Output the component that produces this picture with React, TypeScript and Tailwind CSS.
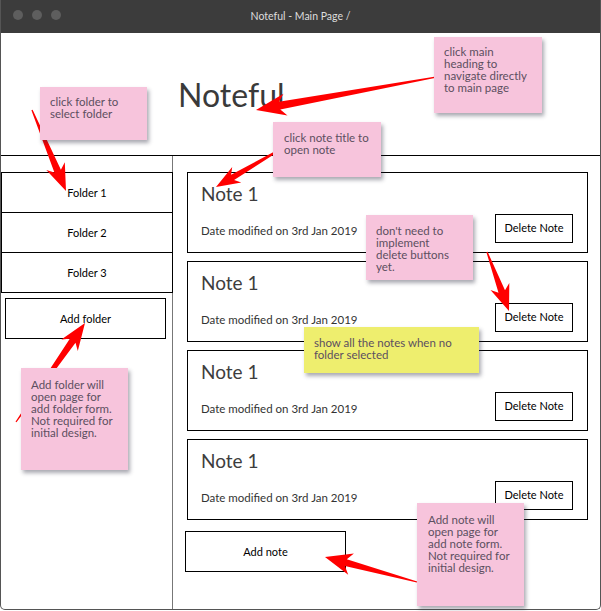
import React from 'react';

type Pt = [number, number];

// tapered pointer arrow, thin at the tail and wide at the head
function arrowPoints(tail: Pt, tip: Pt, headLen = 26, headHalf = 10, shaft = 3.5) {
    const dx = tip[0] - tail[0];
    const dy = tip[1] - tail[1];
    const len = Math.hypot(dx, dy);
    const ux = dx / len;
    const uy = dy / len;
    const nx = -uy;
    const ny = ux;
    const at = (d: number, off: number): string =>
        `${(tip[0] - ux * d + nx * off).toFixed(1)},${(tip[1] - uy * d + ny * off).toFixed(1)}`;
    return [
        `${(tail[0] + nx * 0.6).toFixed(1)},${(tail[1] + ny * 0.6).toFixed(1)}`,
        at(headLen * 0.8, shaft),
        at(headLen, headHalf),
        at(0, 0),
        at(headLen, -headHalf),
        at(headLen * 0.8, -shaft),
        `${(tail[0] - nx * 0.6).toFixed(1)},${(tail[1] - ny * 0.6).toFixed(1)}`,
    ].join(' ');
}

const arrows: { tail: Pt; tip: Pt; head?: number; half?: number; shaft?: number }[] = [
    { tail: [442, 76], tip: [256, 110], head: 30, half: 11, shaft: 4 },
    { tail: [32, 110], tip: [66, 191], head: 27, half: 10 },
    { tail: [286, 146], tip: [216, 187], head: 24, half: 9, shaft: 3 },
    { tail: [487, 252], tip: [509, 311], head: 26, half: 10 },
    { tail: [16, 422], tip: [85, 323], head: 27, half: 10 },
    { tail: [417, 582], tip: [325, 557], head: 27, half: 11 },
];

const stickies = [
    { cls: 'left-[40px] top-[87px] w-[107px] h-[53px] pt-[9px] pl-[10px] bg-[#f7c4dc]', lines: ['click folder to', 'select folder'] },
    { cls: 'left-[434px] top-[37px] w-[108px] h-[76px] pt-[9px] pl-[10px] bg-[#f7c4dc]', lines: ['click main', 'heading to', 'navigate directly', 'to main page'] },
    { cls: 'left-[273px] top-[122px] w-[108px] h-[55px] pt-[10px] pl-[11px] bg-[#f7c4dc]', lines: ['click note title to', 'open note'] },
    { cls: 'left-[366px] top-[215px] w-[107px] h-[65px] pt-[10px] pl-[10px] bg-[#f7c4dc]', lines: ["don't need to", 'implement', 'delete buttons', 'yet.'] },
    { cls: 'left-[304px] top-[327px] w-[175px] h-[46px] pt-[10px] pl-[10px] bg-[#eeee6e]', lines: ['show all the notes when no', 'folder selected'] },
    { cls: 'left-[417px] top-[503px] w-[107px] h-[103px] pt-[11px] pl-[11px] bg-[#f7c4dc]', lines: ['Add note will', 'open page for', 'add note form.', 'Not required for', 'initial design.'] },
    { cls: 'left-[21px] top-[368px] w-[107px] h-[102px] pt-[11px] pl-[10px] bg-[#f7c4dc]', lines: ['Add folder will', 'open page for', 'add folder form.', 'Not required for', 'initial design.'] },
];

function NoteCard() {
    return (
        <div className="h-[81px] w-[401px] border border-black flex flex-col pl-[13px] pr-[14px] pb-[9px]">
            <h2 className="text-[19px] leading-none text-[#3d3d3d] mt-[11px]">Note 1</h2>
            <div className="flex-1 flex items-end justify-between">
                <span className="text-[11.5px] text-[#333] mb-[4px]">Date modified on 3rd Jan 2019</span>
                <button className="w-[78px] h-[29px] border border-black text-[11px] text-black bg-white">Delete Note</button>
            </div>
        </div>
    );
}

export default function App() {
    return (
        <div className="relative w-[601px] h-[611px] bg-white overflow-hidden font-['Lato','Liberation_Sans',sans-serif]">
            <div className="h-[610px] flex flex-col border-x border-b border-[#555] rounded-b-[5px] overflow-hidden">
                {/* Title bar */}
                <div className="relative h-[33px] bg-[#3c3c3c] flex items-center justify-center shrink-0">
                    <div className="absolute left-[12px] top-[10px] flex gap-[9px]">
                        <span className="w-[10px] h-[10px] rounded-full bg-[#5e5e5e]" />
                        <span className="w-[10px] h-[10px] rounded-full bg-[#5e5e5e]" />
                        <span className="w-[10px] h-[10px] rounded-full bg-[#5e5e5e]" />
                    </div>
                    <span className="text-[10.5px] text-[#dedede]">Noteful - Main Page /</span>
                </div>

                {/* Header */}
                <header className="h-[123px] border-b border-black shrink-0 pl-[177px] pt-[46px]">
                    <h1 className="text-[32px] leading-none text-[#3a3a3a]">Noteful</h1>
                </header>

                <div className="flex flex-1">
                    {/* Sidebar */}
                    <aside className="w-[172px] border-r border-[#777] pt-[16px] flex flex-col">
                        {['Folder 1', 'Folder 2', 'Folder 3'].map((f, i) => (
                            <div
                                key={f}
                                className={`w-[172px] h-[41px] border border-black flex items-center justify-center pt-[2px] text-[11px] text-black ${i > 0 ? '-mt-px' : ''}`}
                            >
                                {f}
                            </div>
                        ))}
                        <button className="mt-[5px] ml-[4px] w-[161px] h-[41px] border border-black pt-[2px] text-[11px] text-black">
                            Add folder
                        </button>
                    </aside>

                    {/* Notes */}
                    <main className="flex-1 pt-[16px] pl-[14px] flex flex-col">
                        <div className="flex flex-col gap-2">
                            <NoteCard />
                            <NoteCard />
                            <NoteCard />
                            <NoteCard />
                        </div>
                        <button className="mt-[11px] -ml-[2px] w-[161px] h-[41px] border border-black pt-[2px] text-[11px] text-black">
                            Add note
                        </button>
                    </main>
                </div>
            </div>

            {/* Annotation arrows */}
            <svg className="absolute inset-0 pointer-events-none" width="601" height="611">
                {arrows.map((a, i) => (
                    <polygon key={i} points={arrowPoints(a.tail, a.tip, a.head, a.half, a.shaft)} fill="#ff0000" />
                ))}
            </svg>

            {/* Sticky notes */}
            {stickies.map((s, i) => (
                <div
                    key={i}
                    className={`absolute ${s.cls} shadow-[2px_3px_4px_rgba(40,40,60,0.4)] text-[11.5px] leading-[12px] text-[#5c4f60]`}
                >
                    {s.lines.map((l) => (
                        <div key={l}>{l}</div>
                    ))}
                </div>
            ))}
        </div>
    );
}
